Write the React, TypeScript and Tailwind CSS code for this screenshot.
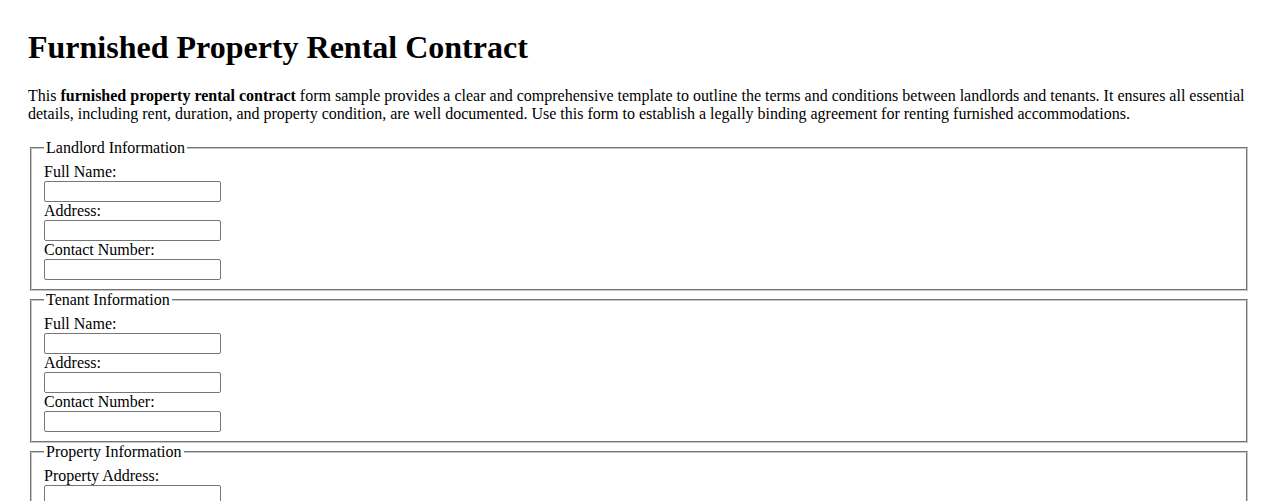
import React from 'react';

type Field = { id: string; label: string; type?: string };

const sections: { title: string; fields: Field[] }[] = [
  {
    title: 'Landlord Information',
    fields: [
      { id: 'landlordName', label: 'Full Name:' },
      { id: 'landlordAddress', label: 'Address:' },
      { id: 'landlordPhone', label: 'Contact Number:', type: 'tel' },
    ],
  },
  {
    title: 'Tenant Information',
    fields: [
      { id: 'tenantName', label: 'Full Name:' },
      { id: 'tenantAddress', label: 'Address:' },
      { id: 'tenantPhone', label: 'Contact Number:', type: 'tel' },
    ],
  },
  {
    title: 'Property Information',
    fields: [
      { id: 'propertyAddress', label: 'Property Address:' },
      { id: 'furnishings', label: 'List of Furnishings:' },
    ],
  },
  {
    title: 'Lease Terms',
    fields: [
      { id: 'startDate', label: 'Start Date:', type: 'date' },
      { id: 'endDate', label: 'End Date:', type: 'date' },
      { id: 'rent', label: 'Monthly Rent:' },
      { id: 'deposit', label: 'Security Deposit:' },
    ],
  },
];

function Section({ title, fields }: { title: string; fields: Field[] }) {
  return (
    <fieldset className="mx-[2px] border-2 [border-style:groove] border-[#c8c8c8] px-[12px] pt-[6px] pb-[9px]">
      <legend className="px-[2px] leading-[18px]">{title}</legend>
      <div className="flex flex-col items-start">
        {fields.map((f) => (
          <React.Fragment key={f.id}>
            <label htmlFor={f.id} className="block leading-[18px]">
              {f.label}
            </label>
            <input
              id={f.id}
              name={f.id}
              type={f.type ?? 'text'}
              className="block w-[177px] h-[21px] border border-[#767676] rounded-[2px] bg-white px-[2px] text-[13px] font-['Liberation_Sans',sans-serif]"
            />
          </React.Fragment>
        ))}
      </div>
    </fieldset>
  );
}

export default function App() {
  return (
    <div className="min-h-screen bg-white px-[28px] pt-[29px] pb-8 font-['Liberation_Serif',serif] text-[16px] text-black">
      <h1 className="text-[32px] font-bold leading-[36px]">Furnished Property Rental Contract</h1>
      <p className="mt-[22px] mb-[16px] leading-[18px]">
        This <strong>furnished property rental contract</strong> form sample provides a clear and comprehensive
        template to outline the terms and conditions between landlords and tenants. It ensures all essential details,
        including rent, duration, and property condition, are well documented. Use this form to establish a legally
        binding agreement for renting furnished accommodations.
      </p>
      <form>
        {sections.map((s) => (
          <Section key={s.title} title={s.title} fields={s.fields} />
        ))}
      </form>
    </div>
  );
}
